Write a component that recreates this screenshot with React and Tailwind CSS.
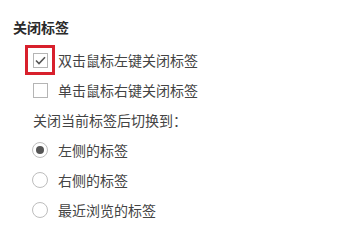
import React, { useState } from "react";

const font = { fontFamily: '"Microsoft YaHei", "Noto Sans CJK SC", "Noto Sans", sans-serif' };

const Check = ({ checked }) => (
    <span className="flex items-center justify-center w-[15px] h-[15px] border border-[#b5b5b5] bg-white">
        {checked && (
            <svg width="11" height="9" viewBox="0 0 11 9" fill="none">
                <path d="M1 4.5 L4 7.5 L10 1.2" stroke="#555" strokeWidth="1.6" />
            </svg>
        )}
    </span>
);

const Radio = ({ checked }) => (
    <span className="flex items-center justify-center w-[16px] h-[16px] rounded-full border border-[#bdbdbd] bg-white">
        {checked && <span className="w-[8px] h-[8px] rounded-full bg-[#555]" />}
    </span>
);

const App = () => {
    const [dbl, setDbl] = useState(true);
    const [right, setRight] = useState(false);
    const [target, setTarget] = useState("left");

    const radios = [
        { key: "left", label: "左侧的标签" },
        { key: "right", label: "右侧的标签" },
        { key: "recent", label: "最近浏览的标签" },
    ];

    return (
        <div className="w-[361px] h-[244px] bg-white text-[14px] text-[#444]" style={font}>
            {/* Title */}
            <div className="pt-[19px] pl-[13px] h-[45px]">
                <h3 className="text-[14px] leading-[16px] font-bold text-[#2b2b2b]">关闭标签</h3>
            </div>

            <div className="pl-[25px]">
                {/* Checkboxes */}
                <div className="flex items-center h-[30px] cursor-pointer" onClick={() => setDbl(!dbl)}>
                    <span className="flex items-center justify-center w-[30px] h-[30px] border-[3px] border-[#d8202c]">
                        <Check checked={dbl} />
                    </span>
                    <span className="ml-[3px]">双击鼠标左键关闭标签</span>
                </div>
                <div className="flex items-center h-[30px] cursor-pointer" onClick={() => setRight(!right)}>
                    <span className="flex items-center justify-center w-[30px]">
                        <Check checked={right} />
                    </span>
                    <span className="ml-[3px]">单击鼠标右键关闭标签</span>
                </div>

                <div className="flex items-center h-[30px] pl-[8px]">关闭当前标签后切换到：</div>

                {/* Radios */}
                {radios.map((r) => (
                    <div key={r.key} className="flex items-center h-[30px] cursor-pointer" onClick={() => setTarget(r.key)}>
                        <span className="flex items-center justify-center w-[30px]">
                            <Radio checked={target === r.key} />
                        </span>
                        <span className="ml-[3px]">{r.label}</span>
                    </div>
                ))}
            </div>
        </div>
    );
};

export default App;
